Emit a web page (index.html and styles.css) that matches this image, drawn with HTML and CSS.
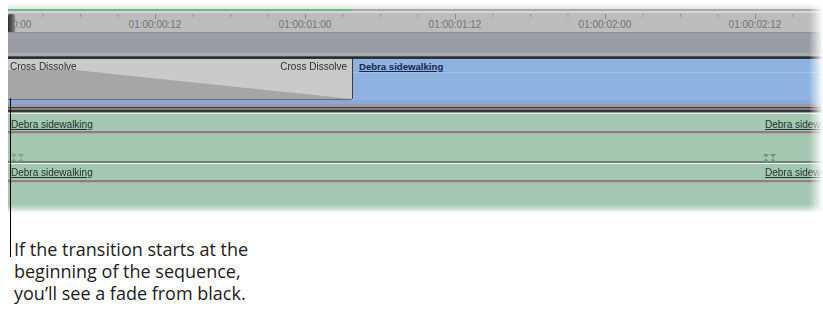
FILE: index.html
```html
<!DOCTYPE html>
<html lang="en">
<head>
<meta charset="utf-8">
<title>Cross Dissolve at sequence start</title>
<link rel="stylesheet" href="styles.css">
</head>
<body>
<div class="figure">
  <div class="timeline">
    <div class="topbar">
      <div class="topbar-shade"></div>
      <div class="progress"><span class="progress-done"></span></div>
      <div class="topbar-gap"></div>
    </div>
    <div class="ruler">
      <div class="playhead"></div>
      <div class="ruler-labels">
        <span class="tc">01:00:00:00</span>
        <span class="tc">01:00:00:12</span>
        <span class="tc">01:00:01:00</span>
        <span class="tc">01:00:01:12</span>
        <span class="tc">01:00:02:00</span>
        <span class="tc">01:00:02:12</span>
      </div>
    </div>
    <div class="band"></div>
    <div class="band-light"></div>
    <div class="rule-dark"></div>
    <div class="vtrack">
      <div class="transition">
        <svg class="transition-ramp" viewBox="0 0 344 40" preserveAspectRatio="none" aria-hidden="true">
          <polygon points="0,11 67,11 344,40 0,40" fill="#a6a6a6"/>
        </svg>
        <div class="transition-labels">
          <span>Cross Dissolve</span>
          <span>Cross Dissolve</span>
        </div>
      </div>
      <div class="vclip"><span class="clip-name vname">Debra sidewalking</span></div>
    </div>
    <div class="vstrip"></div>
    <div class="sep"></div>
    <div class="atrack">
      <div class="aclip first">
        <div class="ahead"><span class="clip-name">Debra sidewalking</span></div>
        <div class="aline"></div>
        <div class="abody tall"></div>
      </div>
      <div class="aclip">
        <div class="ahead"><span class="clip-name">Debra sidewalking</span></div>
        <div class="aline"></div>
        <div class="abody tall"></div>
      </div>
    </div>
    <div class="track-divider">
      <svg class="marker marker-left" viewBox="0 0 14 8" aria-hidden="true">
        <polygon points="0,0 6,0 3,3.5"/><polygon points="3,4.5 0,8 6,8"/>
        <polygon points="7,0 13,0 10,3.5"/><polygon points="10,4.5 7,8 13,8"/>
      </svg>
      <svg class="marker marker-right" viewBox="0 0 14 8" aria-hidden="true">
        <polygon points="0,0 6,0 3,3.5"/><polygon points="3,4.5 0,8 6,8"/>
        <polygon points="7,0 13,0 10,3.5"/><polygon points="10,4.5 7,8 13,8"/>
      </svg>
    </div>
    <div class="atrack">
      <div class="aclip first">
        <div class="ahead second"><span class="clip-name">Debra sidewalking</span></div>
        <div class="aline"></div>
        <div class="abody short"></div>
      </div>
      <div class="aclip">
        <div class="ahead second"><span class="clip-name">Debra sidewalking</span></div>
        <div class="aline"></div>
        <div class="abody short"></div>
      </div>
    </div>
    <div class="bottom-fade"></div>
  </div>
  <div class="callout-line"></div>
  <p class="caption">If the transition starts at the<br>beginning of the sequence,<br>you’ll see a fade from black.</p>
</div>
</body>
</html>
```
FILE: styles.css
```css
html, body {
  margin: 0;
  padding: 0;
  background: #ffffff;
}

.figure {
  position: relative;
  width: 823px;
  height: 321px;
  overflow: hidden;
}

.timeline {
  margin-left: 8px;
  width: 815px;
  overflow: hidden;
  font-family: "Liberation Sans", Arial, sans-serif;
  font-size: 10px;
  -webkit-mask-image: linear-gradient(to right, #000 calc(100% - 14px), transparent);
  mask-image: linear-gradient(to right, #000 calc(100% - 14px), transparent);
}

/* top bar */
.topbar {
  height: 13px;
  display: flex;
  flex-direction: column;
}
.topbar-shade {
  height: 9px;
  background: linear-gradient(#ffffff 35%, #e4e4e4);
}
.progress {
  height: 2px;
  background: #a9a9a9;
}
.progress-done {
  display: block;
  width: 344px;
  height: 2px;
  background: #64bb88;
}
.topbar-gap {
  height: 2px;
  background: #d6d6d6;
}

/* ruler */
.ruler {
  position: relative;
  height: 19px;
  border-bottom: 1px solid #8e8e8e;
  background-color: #bcbcbc;
  background-image:
    linear-gradient(to right, #8a8a8a 1px, transparent 1px),
    linear-gradient(to right, #909090 1px, transparent 1px);
  background-size: 150px 5px, 37.5px 3px;
  background-position: -3px 1px, -3px 1px;
  background-repeat: repeat-x;
}
.ruler-labels {
  display: flex;
  margin-left: -78px;
  padding-top: 6px;
}
.tc {
  flex: none;
  width: 150px;
  text-align: center;
  color: #727272;
  font-size: 10px;
  line-height: 12px;
}
.playhead {
  position: absolute;
  left: 0;
  top: 1px;
  width: 7px;
  height: 18px;
  border-radius: 2px 2px 0 0;
  background: linear-gradient(to right, #2e2e2e, #5a5a5a 55%, #8c8c8c);
}

.band {
  height: 20px;
  background: #9b9da5;
}
.band-light {
  height: 3px;
  background: #a9abb3;
}
.rule-dark {
  height: 3px;
  background: linear-gradient(#707070, #262626 45%, #3c3c3c);
}

/* video track */
.vtrack {
  display: flex;
  height: 41px;
}
.transition {
  position: relative;
  flex: none;
  width: 345px;
  box-sizing: border-box;
  background: #cacaca;
  border-right: 1px solid #3c3c3c;
  border-bottom: 1px solid #6a6a6a;
  border-bottom-right-radius: 2px;
}
.transition-ramp {
  position: absolute;
  inset: 0;
  width: 100%;
  height: 100%;
}
.transition-labels {
  position: relative;
  display: flex;
  justify-content: space-between;
  padding: 2px 5px 0 2px;
  line-height: 12px;
  color: #2f2f2f;
}
.vclip {
  flex: 1;
  padding: 2px 0 0 6px;
  line-height: 12px;
  background: linear-gradient(#8eb3e1 0 13px, #a4c3ea 13px 14px, #8eb3e1 14px);
}
.clip-name {
  text-decoration: underline;
  white-space: nowrap;
}
.vname {
  color: #16284f;
  font-weight: bold;
  font-size: 9.6px;
}
.vstrip {
  height: 4px;
  background: #88a9da;
}
.sep {
  height: 10px;
  background: linear-gradient(
    #9e98a3 0 3px,
    #3e3e3e 3px 4px,
    #7e7e82 4px 6px,
    #353535 6px 8px,
    #9b9b9b 8px 9px,
    #e6eee8 9px 10px
  );
}

/* audio tracks */
.atrack {
  display: flex;
}
.aclip {
  flex: 1;
  min-width: 0;
  overflow: hidden;
  background: #a3c7b0;
}
.aclip.first {
  flex: none;
  width: 754px;
}
.ahead {
  height: 17px;
  box-sizing: border-box;
  padding: 5px 0 0 3px;
  line-height: 12px;
  color: #22332a;
  white-space: nowrap;
}
.ahead.second {
  height: 16px;
  padding-top: 3px;
}
.aline {
  height: 3px;
  background: linear-gradient(#8d7d87 0 2px, #b8a8ae 2px);
}
.abody.tall {
  height: 27px;
}
.abody.short {
  height: 21px;
}
.track-divider {
  position: relative;
  height: 3px;
  background: linear-gradient(#6e8073 0 2px, #edf3ee 2px);
}
.marker {
  position: absolute;
  top: -7px;
  width: 14px;
  height: 8px;
  fill: #5e9c74;
}
.marker-left {
  left: 3px;
  opacity: 0.7;
}
.marker-right {
  left: 755px;
}
.bottom-fade {
  height: 9px;
  background: linear-gradient(#a3c7b0, #c8dccf 50%, #ffffff);
}

/* callout */
.callout-line {
  position: absolute;
  left: 10px;
  top: 98px;
  width: 1px;
  height: 159px;
  background: #000000;
}
.caption {
  margin: 25px 0 0 14px;
  font-family: "Open Sans", "Noto Sans", sans-serif;
  font-size: 18px;
  line-height: 22px;
  color: #1c1c1c;
}
```
